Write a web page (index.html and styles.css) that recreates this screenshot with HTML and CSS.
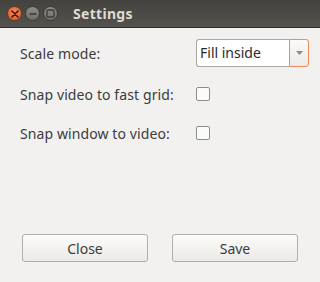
FILE: index.html
```html
<!DOCTYPE html>
<html>
<head>
<meta charset="utf-8">
<link rel="stylesheet" href="styles.css">
</head>
<body>
<div class="window">
  <div class="titlebar">
    <div class="wbtns">
      <span class="wbtn close"><svg width="8" height="8" viewBox="0 0 8 8"><path d="M1 1L7 7M7 1L1 7" stroke="#3b1a0e" stroke-width="1.6" stroke-linecap="round"/></svg></span>
      <span class="wbtn"><svg width="8" height="8" viewBox="0 0 8 8"><path d="M0.5 4H7.5" stroke="#3c3b37" stroke-width="1.6"/></svg></span>
      <span class="wbtn"><svg width="9" height="9" viewBox="0 0 9 9"><rect x="1" y="1" width="7" height="7" fill="none" stroke="#3c3b37" stroke-width="1.3" rx="1"/></svg></span>
    </div>
    <div class="title">Settings</div>
  </div>
  <div class="content">
    <div class="form">
      <div class="label">Scale mode:</div>
      <div class="field">
        <div class="combo">
          <span class="combo-text">Fill inside</span>
          <span class="combo-arrow"><svg width="7" height="4" viewBox="0 0 7 4"><path d="M0 0H7L3.5 4Z" fill="#8a8a8a"/></svg></span>
        </div>
      </div>
      <div class="label">Snap video to fast grid:</div>
      <div class="field"><span class="check"></span></div>
      <div class="label">Snap window to video:</div>
      <div class="field"><span class="check"></span></div>
    </div>
    <div class="buttons">
      <button class="btn">Close</button>
      <button class="btn">Save</button>
    </div>
  </div>
</div>
</body>
</html>
```
FILE: styles.css
```css
* { box-sizing: border-box; }
html, body { margin: 0; padding: 0; }
body {
  width: 320px;
  height: 282px;
  overflow: hidden;
  background: #f2f1f0;
  font-family: "Noto Sans", "Open Sans", sans-serif;
  color: #3c3c3c;
}
.window { display: flex; flex-direction: column; height: 282px; }
.titlebar {
  height: 28px;
  flex: none;
  background: linear-gradient(to bottom, #43423e 0%, #4d4c47 60%, #54534d 100%);
  border-bottom: 1px solid #2f2e2b;
  display: flex;
  align-items: center;
  padding-left: 7px;
}
.wbtns { display: flex; gap: 3px; align-items: center; }
.wbtn {
  width: 15px; height: 15px;
  border-radius: 50%;
  background: linear-gradient(to bottom, #8d8c86, #6f6e68);
  border: 1px solid #3a3935;
  display: flex; align-items: center; justify-content: center;
}
.wbtn.close { background: radial-gradient(circle at 50% 40%, #f58a5c, #e2521d); border-color: #6b3a22; }
.title {
  margin-left: 15px;
  color: #dfdbd2;
  font-weight: bold;
  font-size: 14px;
  letter-spacing: 0.3px;
}
.content {
  flex: 1;
  display: flex;
  flex-direction: column;
  justify-content: space-between;
  padding: 11px 22px 20px 20px;
}
.form {
  display: grid;
  grid-template-columns: 176px 1fr;
  grid-template-rows: 28px 54px 24px;
  align-items: center;
}
.label { font-size: 14px; color: #3c3c3c; letter-spacing: 0.1px; }
.field { display: flex; align-items: center; }
.combo {
  display: flex;
  width: 113px;
  height: 28px;
}
.combo-text {
  flex: 1;
  font-size: 14px;
  color: #2a2a2a;
  padding-left: 3px;
  line-height: 26px;
  background: #fff;
  border: 1px solid #a9a8a5;
  border-right: none;
  border-radius: 3px 0 0 3px;
}
.combo-arrow {
  width: 20px;
  border: 1px solid #e98c5e;
  border-radius: 0 3px 3px 0;
  background: linear-gradient(to bottom, #fbfaf9, #eceae8);
  display: flex; align-items: center; justify-content: center;
}
.check {
  width: 14px; height: 14px;
  border: 1px solid #8f8e8b;
  border-radius: 2px;
  background: #fbfbfa;
}
.buttons { display: flex; justify-content: space-between; padding-left: 2px; }
.btn {
  width: 126px;
  height: 28px;
  border: 1px solid #b1afab;
  border-radius: 3px;
  background: linear-gradient(to bottom, #fcfcfb, #ebe9e7);
  font-family: inherit;
  font-size: 14px;
  color: #3c3c3c;
  padding: 0;
}
```
